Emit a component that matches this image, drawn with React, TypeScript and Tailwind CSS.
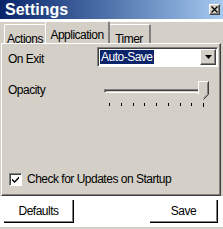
import React from "react";

const raised =
  "border border-t-white border-l-white border-r-[#404040] border-b-[#404040] shadow-[inset_-1px_-1px_0_#808080]";

function Tab({ label, active, width }: { label: string; active?: boolean; width: string }) {
  return (
    <div
      className={
        active
          ? `relative z-10 -mx-[2px] ${width} h-[22px] pt-[4px] flex justify-center border-t border-l border-t-white border-l-white border-r-2 border-r-[#808080] rounded-t-[2px] bg-[#d4d0c8] text-[12px]`
          : `${width} h-[19px] pt-[5px] flex justify-center border-t border-l border-t-white border-l-white border-r-2 border-r-[#808080] rounded-t-[2px] text-[12px]`
      }
    >
      {label}
    </div>
  );
}

function Ticks() {
  const ticks = [0, 1, 2, 3, 4, 5, 6, 7, 8];
  return (
    <div className="flex justify-between px-[5px] mt-[3px]">
      {ticks.map((t) => (
        <div
          key={t}
          className={t === 8 ? "w-px h-[4px] bg-black" : "w-px h-[3px] bg-black"}
        />
      ))}
    </div>
  );
}

export default function App() {
  return (
    <div
      className="w-[223px] h-[229px] bg-[#d4d0c8] flex flex-col overflow-hidden text-black tracking-[-0.5px]"
      style={{ fontFamily: '"Liberation Sans", Arial, sans-serif' }}
    >
      {/* title bar */}
      <div className="h-[19px] shrink-0 flex items-center justify-between pl-[5px] pr-[3px] bg-gradient-to-r from-[#0a246a] to-[#a6caf0] tracking-normal">
        <span className="text-white font-bold text-[16px] leading-none">Settings</span>
        <div className={`w-[11px] h-[11px] bg-[#d4d0c8] flex items-center justify-center ${raised}`}>
          <svg width="7" height="7" viewBox="0 0 7 7">
            <path d="M0.5 0.5L6.5 6.5M6.5 0.5L0.5 6.5" stroke="black" strokeWidth="1.3" />
          </svg>
        </div>
      </div>
      <div className="h-[3px] shrink-0 bg-white" />

      {/* tabs */}
      <div className="flex items-end pl-[4px] h-[21px] shrink-0">
        <Tab label="Actions" width="w-[43px]" />
        <Tab label="Application" width="w-[65px]" active />
        <Tab label="Timer" width="w-[43px]" />
      </div>

      {/* panel */}
      <div className="ml-[1px] mr-[2px] h-[153px] shrink-0 border border-t-white border-l-white border-r-[#404040] border-b-[#404040] shadow-[inset_-1px_-1px_0_#808080] flex flex-col pl-[6px] pr-[2px] pt-[2px]">
        <div className="flex items-center justify-between">
          <span className="text-[12px] mt-[4px]">On Exit</span>
          <div className="w-[121px] h-[20px] bg-white border border-t-[#808080] border-l-[#808080] border-r-white border-b-white shadow-[inset_1px_1px_0_#404040] flex items-center pl-[2px] pr-[1px]">
            <span className="flex-1 flex">
              <span className="bg-[#0a246a] text-white text-[12px] px-[1px] leading-[14px]">Auto-Save</span>
            </span>
            <div className={`w-[16px] h-[16px] bg-[#d4d0c8] flex items-center justify-center ${raised}`}>
              <svg width="7" height="4" viewBox="0 0 7 4">
                <path d="M0 0H7L3.5 4Z" fill="black" />
              </svg>
            </div>
          </div>
        </div>

        <div className="flex items-start justify-between mt-[13px]">
          <span className="text-[12px]">Opacity</span>
          <div className="w-[105px] mr-[9px] flex flex-col">
            <div className="relative h-[19px]">
              <div className="absolute left-0 right-0 top-[8px] h-[4px] border border-t-[#808080] border-l-[#808080] border-r-white border-b-white shadow-[inset_1px_1px_0_#404040]" />
              <svg className="absolute right-0 top-0" width="11" height="19" viewBox="0 0 11 19">
                <path d="M0.5 0.5H10.5V13.5L5.5 18.5L0.5 13.5Z" fill="#d4d0c8" />
                <path d="M10.5 0.5V13.5L5.5 18.5" stroke="#404040" fill="none" />
                <path d="M9.5 1.5V13L5.5 17" stroke="#808080" fill="none" />
                <path d="M0.5 13.5V0.5H10" stroke="white" fill="none" />
              </svg>
            </div>
            <Ticks />
          </div>
        </div>

        <label className="flex items-center gap-[5px] mt-auto mb-[7px] ml-[1px]">
          <div className="w-[13px] h-[13px] bg-white border border-t-[#808080] border-l-[#808080] border-r-white border-b-white shadow-[inset_1px_1px_0_#404040] flex items-center justify-center">
            <svg width="7" height="7" viewBox="0 0 7 7">
              <path d="M0 2.5L2.5 5L7 0.5V2.5L2.5 7L0 4.5Z" fill="black" />
            </svg>
          </div>
          <span className="text-[12px]">Check for Updates on Startup</span>
        </label>
      </div>

      {/* buttons */}
      <div className="flex-1 bg-white flex justify-between items-start pl-[4px] pr-[5px] pt-[4px] border-b-2 border-b-[#d4d0c8]">
        <button className="w-[70px] h-[23px] bg-white border-r border-b border-r-black border-b-black shadow-[inset_-1px_-1px_0_#808080] text-[12px]">
          Defaults
        </button>
        <button className="w-[68px] h-[23px] bg-white border-r border-b border-r-black border-b-black shadow-[inset_-1px_-1px_0_#808080] text-[12px]">
          Save
        </button>
      </div>
    </div>
  );
}
